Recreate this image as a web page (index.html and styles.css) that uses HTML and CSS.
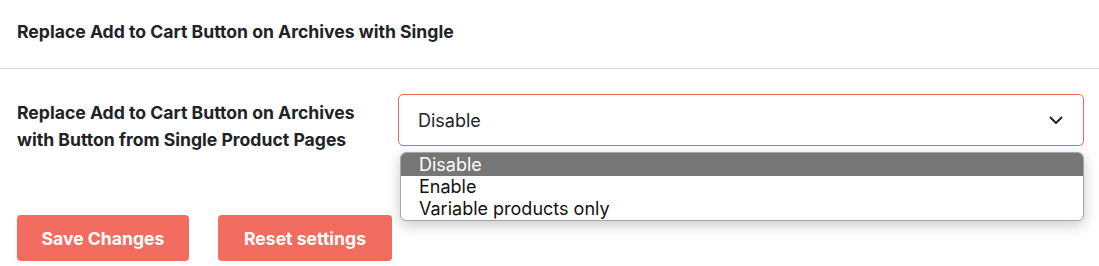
FILE: index.html
```html
<!DOCTYPE html>
<html>
<head>
<meta charset="utf-8">
<link rel="stylesheet" href="styles.css">
</head>
<body>
<div class="page">
  <h2 class="section-title">Replace Add to Cart Button on Archives with Single</h2>
  <div class="setting-row">
    <div class="setting-label">Replace Add to Cart Button on Archives with Button from Single Product Pages</div>
    <div class="setting-field">
      <div class="select">
        <span class="select-value">Disable</span>
        <svg class="chevron" width="14" height="9" viewBox="0 0 14 9"><path d="M1.5 1.5 L7 7 L12.5 1.5" fill="none" stroke="#1e1e1e" stroke-width="1.9" stroke-linecap="round" stroke-linejoin="round"/></svg>
      </div>
      <ul class="dropdown">
        <li class="option selected">Disable</li>
        <li class="option">Enable</li>
        <li class="option">Variable products only</li>
      </ul>
    </div>
  </div>
  <div class="actions">
    <button class="btn btn-save">Save Changes</button>
    <button class="btn btn-reset">Reset settings</button>
  </div>
</div>
</body>
</html>
```
FILE: styles.css
```css
html, body {
  margin: 0;
  padding: 0;
  background: #fff;
}
body {
  font-family: Inter, "Liberation Sans", sans-serif;
  color: #1d2327;
}
.page {
  width: 1099px;
}
.section-title {
  margin: 0;
  font-size: 17.6px;
  font-weight: 700;
  line-height: 22px;
  padding: 21px 17px 0;
  box-sizing: border-box;
  border-bottom: 1px solid #dcdcde;
  height: 69px;
}
.setting-row {
  display: flex;
  padding: 25px 15px 0 17px;
  height: 146px;
  box-sizing: border-box;
}
.setting-label {
  width: 381px;
  font-size: 17.6px;
  font-weight: 700;
  line-height: 27px;
  padding-top: 5px;
  padding-right: 20px;
  box-sizing: border-box;
}
.setting-field {
  position: relative;
  flex: 1;
}
.select {
  height: 52px;
  box-sizing: border-box;
  border: 1px solid #f0695c;
  border-radius: 5px;
  display: flex;
  align-items: center;
  justify-content: space-between;
  padding: 0 20px 0 19px;
  font-size: 18px;
  background: #fff;
}
.chevron {
  display: block;
}
.dropdown {
  position: absolute;
  left: 2px;
  right: 0;
  top: 58px;
  margin: 0;
  padding: 0;
  list-style: none;
  background: #fff;
  border: 1px solid #a5a5a5;
  border-radius: 6px;
  overflow: hidden;
  box-shadow: 0 4px 14px rgba(0,0,0,0.22);
  z-index: 5;
}
.option {
  font-size: 18px;
  line-height: 22px;
  height: 22px;
  padding-left: 18px;
  color: #111;
}
.option.selected {
  background: #767676;
  color: #fff;
  height: 23px;
  line-height: 24px;
}
.actions {
  display: flex;
  gap: 29px;
  padding: 0 17px;
}
.btn {
  font-family: Inter, "Liberation Sans", sans-serif;
  font-size: 17.6px;
  font-weight: 700;
  color: #fff;
  background: #f26d60;
  border: none;
  border-radius: 4px;
  height: 46px;
  padding: 0;
  white-space: nowrap;
  box-sizing: border-box;
}
.btn-save {
  width: 172px;
}
.btn-reset {
  width: 174px;
}
```
